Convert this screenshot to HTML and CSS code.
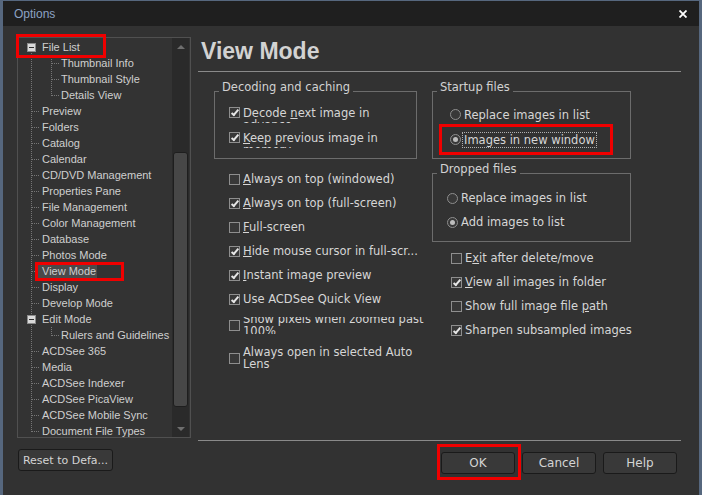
FILE: index.html
```html
<!DOCTYPE html>
<html lang="en">
<head>
    <meta charset="UTF-8">
    <title>Options</title>
    <link rel="stylesheet" href="styles.css">
</head>
<body>
<div class="window">
    <div class="titlebar">
        <span class="title">Options</span>
        <svg class="close" width="8" height="8" viewBox="0 0 8 8"><path d="M0.5 0.5L7.5 7.5M7.5 0.5L0.5 7.5" stroke="#fff" stroke-width="1.8"/></svg>
    </div>
    <div class="content">
        <div class="side">
            <div class="tree">
                <ul class="items">
                    <li class="first"><i class="box"></i>File List</li>
                    <li class="sub">Thumbnail Info</li>
                    <li class="sub">Thumbnail Style</li>
                    <li class="sub last">Details View</li>
                    <li>Preview</li>
                    <li>Folders</li>
                    <li>Catalog</li>
                    <li>Calendar</li>
                    <li>CD/DVD Management</li>
                    <li>Properties Pane</li>
                    <li>File Management</li>
                    <li>Color Management</li>
                    <li>Database</li>
                    <li>Photos Mode</li>
                    <li><span class="sel">View Mode</span></li>
                    <li>Display</li>
                    <li>Develop Mode</li>
                    <li class="parent"><i class="box"></i>Edit Mode</li>
                    <li class="sub last">Rulers and Guidelines</li>
                    <li>ACDSee 365</li>
                    <li>Media</li>
                    <li>ACDSee Indexer</li>
                    <li>ACDSee PicaView</li>
                    <li>ACDSee Mobile Sync</li>
                    <li class="end">Document File Types</li>
                </ul>
                <div class="sb">
                    <div class="arr up"></div>
                    <div class="track"><div class="thumb"></div></div>
                    <div class="arr down"></div>
                </div>
                <span class="mark mark-filelist"></span>
                <span class="mark mark-viewmode"></span>
            </div>
            <button class="btn reset">Reset to Defa...</button>
        </div>

        <div class="main">
            <h1>View Mode</h1>
            <div class="cols">
                <div class="col col-left">
                    <div class="group g-decode">
                        <span class="legend">Decoding and caching</span>
                        <div class="rows">
                            <div class="opt tall"><span class="cb on"></span><span class="lbl cut">Decode <u>n</u>ext image in advance</span></div>
                            <div class="opt tall"><span class="cb on"></span><span class="lbl cut"><u>K</u>eep previous image in memory</span></div>
                        </div>
                    </div>
                    <div class="checks">
                        <div class="opt"><span class="cb"></span><span class="lbl"><u>A</u>lways on top (windowed)</span></div>
                        <div class="opt"><span class="cb on"></span><span class="lbl"><u>A</u>lways on top (full-screen)</span></div>
                        <div class="opt"><span class="cb"></span><span class="lbl"><u>F</u>ull-screen</span></div>
                        <div class="opt"><span class="cb on"></span><span class="lbl"><u>H</u>ide mouse cursor in full-scr...</span></div>
                        <div class="opt"><span class="cb on"></span><span class="lbl"><u>I</u>nstant image preview</span></div>
                        <div class="opt"><span class="cb on"></span><span class="lbl">Use ACDSee Quick View</span></div>
                        <div class="opt squeeze"><span class="cb"></span><span class="lbl window2"><span>Show pixels when zoomed past 100%</span></span></div>
                        <div class="opt double"><span class="cb"></span><span class="lbl wrap">Always open in selected Auto Lens</span></div>
                    </div>
                </div>

                <div class="col col-right">
                    <div class="group g-startup">
                        <span class="legend">Startup files</span>
                        <div class="rows">
                            <div class="opt tall"><span class="rb"></span><span class="lbl">Replace images in list</span></div>
                            <div class="opt tall focus-row"><span class="rb on"></span><span class="lbl focus">Images in new window</span><span class="mark mark-startup"></span></div>
                        </div>
                    </div>
                    <div class="group g-dropped">
                        <span class="legend">Dropped files</span>
                        <div class="rows">
                            <div class="opt"><span class="rb"></span><span class="lbl">Replace images in list</span></div>
                            <div class="opt"><span class="rb on"></span><span class="lbl">Add images to list</span></div>
                        </div>
                    </div>
                    <div class="checks right-checks">
                        <div class="opt"><span class="cb"></span><span class="lbl">E<u>x</u>it after delete/move</span></div>
                        <div class="opt"><span class="cb on"></span><span class="lbl"><u>V</u>iew all images in folder</span></div>
                        <div class="opt"><span class="cb"></span><span class="lbl">Show full image file <u>p</u>ath</span></div>
                        <div class="opt"><span class="cb on"></span><span class="lbl">Sharpen subsampled images</span></div>
                    </div>
                </div>
            </div>

            <div class="footer">
                <button class="btn ok">OK<span class="mark mark-ok"></span></button>
                <button class="btn">Cancel</button>
                <button class="btn">Help</button>
            </div>
        </div>
    </div>
</div>
</body>
</html>
```

FILE: styles.css
```css
html, body {
    margin: 0;
    padding: 0;
}
body {
    background: #56677e;
    padding: 1px 3px 0 3px;
    height: 495px;
    box-sizing: border-box;
    overflow: hidden;
    font-family: "DejaVu Sans", sans-serif;
    font-size: 11.5px;
    color: #d6d6d6;
}
.window {
    background: #323232;
    height: 494px;
    display: flex;
    flex-direction: column;
}

/* title bar */
.titlebar {
    height: 25px;
    flex: none;
    background: #1f1f1f;
    display: flex;
    align-items: center;
    justify-content: space-between;
    padding: 0 12px 0 11px;
}
.title {
    font-family: "Liberation Sans", sans-serif;
    font-size: 12px;
    color: #8ca2c4;
}

.content {
    flex: 1;
    display: flex;
    gap: 7px;
    padding: 0 18px 0 14px;
}

/* left side: tree */
.side {
    width: 174px;
    padding-top: 11px;
    display: flex;
    flex-direction: column;
}
.tree {
    position: relative;
    height: 401px;
    box-sizing: border-box;
    border: 1px solid #505050;
    background: #333;
    display: flex;
}
.items {
    flex: 1;
    margin: 0;
    padding: 1px 0 0 0;
    list-style: none;
    overflow: hidden;
    font-family: "Liberation Sans", sans-serif;
    font-size: 11px;
    color: #cfcfcf;
}
.items li {
    height: 16px;
    line-height: 16px;
    display: flex;
    align-items: center;
    white-space: nowrap;
    padding-left: 24px;
    background-image:
        repeating-linear-gradient(to bottom, #767676 0 1px, transparent 1px 2px),
        repeating-linear-gradient(to right, #767676 0 1px, transparent 1px 2px);
    background-size: 1px 16px, 8px 1px;
    background-position: 13px 0, 14px 8px;
    background-repeat: no-repeat;
}
.items li.first {
    background-size: 1px 8px;
    background-position: 13px 8px;
    background-image: repeating-linear-gradient(to bottom, #767676 0 1px, transparent 1px 2px);
}
.items li.first, .items li.parent {
    padding-left: 9px;
}
.items li.parent {
    background-image: repeating-linear-gradient(to bottom, #767676 0 1px, transparent 1px 2px);
}
.items li.end {
    background-size: 1px 9px, 8px 1px;
}
.items li.sub {
    padding-left: 43px;
    background-image:
        repeating-linear-gradient(to bottom, #767676 0 1px, transparent 1px 2px),
        repeating-linear-gradient(to bottom, #767676 0 1px, transparent 1px 2px),
        repeating-linear-gradient(to right, #767676 0 1px, transparent 1px 2px);
    background-size: 1px 16px, 1px 16px, 8px 1px;
    background-position: 13px 0, 33px 0, 34px 8px;
}
.items li.sub.last {
    background-size: 1px 16px, 1px 9px, 8px 1px;
}
.box {
    width: 9px;
    height: 9px;
    box-sizing: border-box;
    border: 1px solid #8c8c8c;
    margin-right: 6px;
    background: linear-gradient(#2e2e2e, #2e2e2e) center / 5px 1px no-repeat, #dadada;
}
.sel {
    background: #4a4a4a;
    margin-left: -4px;
    padding: 0 1px 0 4px;
}

.sb {
    width: 17px;
    margin-right: 1px;
    background: #2a2a2a;
    display: flex;
    flex-direction: column;
}
.arr {
    height: 17px;
    flex: none;
    display: flex;
    align-items: center;
    justify-content: center;
}
.arr::after {
    content: "";
    border-left: 4px solid transparent;
    border-right: 4px solid transparent;
}
.arr.up::after {
    border-bottom: 4px solid #6e6e6e;
}
.arr.down::after {
    border-top: 4px solid #6e6e6e;
}
.track {
    flex: 1;
}
.thumb {
    margin: 97px 0 0 1px;
    width: 15px;
    height: 255px;
    box-sizing: border-box;
    background: #474747;
    border: 1px solid #1e1e1e;
    border-radius: 3px;
}

/* red annotation boxes */
.mark {
    position: absolute;
    border: 3px solid #f00000;
    box-sizing: border-box;
    pointer-events: none;
}
.mark-filelist {
    left: -2px;
    top: -4px;
    width: 90px;
    height: 24px;
}
.mark-viewmode {
    left: 17px;
    top: 224px;
    width: 89px;
    height: 19px;
}

.btn {
    font-family: "DejaVu Sans", sans-serif;
    font-size: 12px;
    color: #d4d4d4;
    background: #393939;
    border: 1px solid #1a1a1a;
    border-radius: 3px;
    height: 22px;
    padding: 0;
}
.reset {
    margin: 11px 0 0 1px;
    width: 95px;
    font-size: 11px;
}

/* main pane */
.main {
    width: 483px;
    display: flex;
    flex-direction: column;
}
h1 {
    margin: 10px 0 0 0;
    padding: 0 0 5px 3px;
    line-height: 30px;
    font-family: "Liberation Sans", sans-serif;
    font-weight: bold;
    font-size: 23px;
    color: #d2d2d2;
    border-bottom: 1px solid #8a8a8a;
}
.cols {
    display: flex;
    gap: 15px;
    padding-left: 16px;
    margin-top: 19px;
}
.col-left {
    width: 203px;
}
.col-right {
    width: 199px;
}

.group {
    border: 1px solid #6c6c6c;
}
.legend {
    display: table;
    margin: -11px 0 0 4px;
    padding: 0 3px;
    line-height: 13px;
    background: #323232;
    color: #d2d2d2;
}
.g-decode .rows {
    margin-top: 6px;
    padding: 0 0 8px 14px;
}
.g-startup .rows {
    margin-top: 8px;
    padding: 0 0 6px 17px;
}
.g-dropped {
    margin-top: 14px;
}
.g-dropped .rows {
    margin-top: 10px;
    padding: 0 0 7px 14px;
}

.opt {
    display: flex;
    align-items: center;
    gap: 3px;
    height: 24px;
}
.opt.tall {
    height: 25px;
}
.lbl {
    line-height: 12px;
    white-space: nowrap;
}
.lbl.cut {
    white-space: normal;
    width: 170px;
    height: 16px;
    margin-bottom: -4px;
    overflow: hidden;
}
.lbl.wrap {
    flex: none;
    white-space: normal;
    width: 192px;
}
.lbl.window2 {
    flex: none;
    white-space: normal;
    width: 198px;
    height: 17px;
    overflow: hidden;
}
.lbl.window2 span {
    display: block;
    margin-top: -4px;
}
.opt.squeeze {
    height: 28px;
}
.opt.double {
    height: 38px;
}

.checks {
    margin-top: 8px;
    padding-left: 15px;
}
.right-checks {
    margin-top: 4px;
    padding-left: 19px;
}

.cb {
    position: relative;
    flex: none;
    width: 11px;
    height: 11px;
    box-sizing: border-box;
    border: 1px solid #8e8e8e;
    background: #383838;
}
.cb.on::after {
    content: "";
    position: absolute;
    left: 3px;
    top: 0;
    width: 2px;
    height: 6px;
    border: solid #e6e6e6;
    border-width: 0 2px 2px 0;
    transform: rotate(40deg);
}
.rb {
    flex: none;
    width: 11px;
    height: 11px;
    box-sizing: border-box;
    border: 1px solid #8e8e8e;
    border-radius: 50%;
    background: #383838;
    display: grid;
    place-items: center;
}
.rb.on::after {
    content: "";
    width: 5px;
    height: 5px;
    border-radius: 50%;
    background: #bdbdbd;
}
.focus-row {
    position: relative;
    gap: 2px;
}
.focus {
    outline: 1px dotted #b0b0b0;
    padding: 1px 1px;
}
.mark-startup {
    left: -11px;
    top: -3px;
    width: 174px;
    height: 31px;
}

.footer {
    margin-top: auto;
    border-top: 1px solid #8a8a8a;
    padding: 11px 4px 21px 0;
    display: flex;
    justify-content: flex-end;
    gap: 7px;
}
.footer .btn {
    width: 74px;
}
.ok {
    position: relative;
}
.mark-ok {
    left: -5px;
    top: -9px;
    width: 84px;
    height: 36px;
}
```
